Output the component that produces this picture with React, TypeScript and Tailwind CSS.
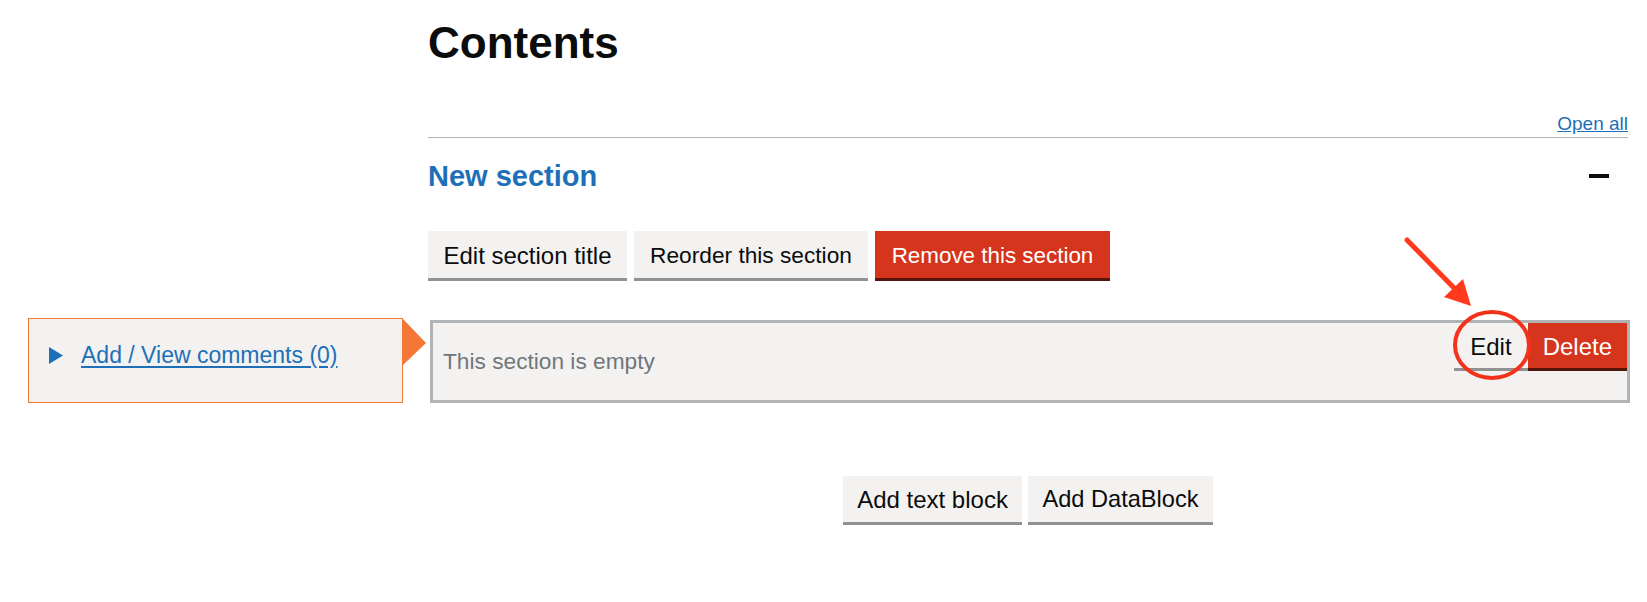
import React from 'react';

interface ButtonProps {
  label: string;
  variant?: 'secondary' | 'warning';
  className?: string;
}

const Button: React.FC<ButtonProps> = ({ label, variant = 'secondary', className = '' }) => {
  const colours =
    variant === 'warning'
      ? 'bg-[#d4351c] text-white shadow-[0_3px_0_#55150b]'
      : 'bg-[#f3f2f1] text-[#0b0c0c] shadow-[0_3px_0_#929191]';
  return (
    <button type="button" className={`leading-[29px] whitespace-nowrap text-center ${colours} ${className}`}>
      {label}
    </button>
  );
};

// red call-out drawn over the Edit button
const Annotation: React.FC = () => (
  <svg
    className="pointer-events-none absolute left-0 top-0"
    width="1647"
    height="602"
    viewBox="0 0 1647 602"
  >
    <ellipse cx="1492" cy="345" rx="37" ry="33" fill="none" stroke="#f2321a" strokeWidth="4" />
    <line x1="1407" y1="240" x2="1460" y2="294" stroke="#ff3a1d" strokeWidth="5" strokeLinecap="round" />
    <polygon points="1471,306 1444,297 1463,279" fill="#ff3a1d" />
  </svg>
);

export default function App() {
  return (
    <div className="relative min-h-[602px] w-full bg-white font-['Liberation_Sans',Arial,sans-serif] text-[#0b0c0c]">
      <div className="ml-[428px] w-[1200px]">
        <h1 className="pt-[19px] text-[44px] font-bold leading-[48px]">Contents</h1>

        <div className="mt-[45px] flex justify-end">
          <a href="#" className="text-[19px] leading-[24px] text-[#1d70b8] underline">
            Open all
          </a>
        </div>

        {/* Section header */}
        <div className="mt-[1px] flex items-center justify-between border-t border-[#b1b4b6] pt-[22px]">
          <h2 className="text-[29px] font-bold leading-[32px] text-[#1d70b8]">New section</h2>
          <span className="mr-[19px] block h-[4px] w-[20px] bg-[#0b0c0c]" />
        </div>

        <div className="mt-[39px] flex gap-[7px]">
          <Button label="Edit section title" className="w-[199px] pt-[10px] pb-[8px] text-[24px]" />
          <Button label="Reorder this section" className="w-[234px] pt-[10px] pb-[8px] text-[22.7px]" />
          <Button
            label="Remove this section"
            variant="warning"
            className="w-[235px] pt-[10px] pb-[8px] text-[22.4px]"
          />
        </div>
      </div>

      {/* Comments + section block */}
      <div className="mt-[40px] flex items-start">
        <div className="ml-[28px] flex h-[85px] w-[375px] items-center border border-[#f47738] bg-[#f3f2f1] pl-[20px] pb-[11px]">
          <svg width="14" height="17" viewBox="0 0 14 17" className="shrink-0">
            <polygon points="0,0 14,8.5 0,17" fill="#1d70b8" />
          </svg>
          <a href="#" className="ml-[18px] text-[23px] leading-[29px] text-[#1d70b8] underline underline-offset-[3px]">
            Add / View comments (0)
          </a>
        </div>
        <svg width="23" height="46" viewBox="0 0 23 46" className="mt-[1px] shrink-0">
          <polygon points="0,0 23,24 0,46" fill="#f47738" />
        </svg>
        <div className="ml-[4px] mt-[2px] flex h-[83px] w-[1200px] border-[3px] border-[#b1b4b6] bg-[#f3f2f1]">
          <p className="flex-1 self-center pl-[10px] text-[22.7px] leading-[29px] text-[#6f777b]">
            This section is empty
          </p>
          <div className="flex self-start">
            <Button label="Edit" className="px-[16px] pt-[9px] pb-[7px] text-[24px]" />
            <Button label="Delete" variant="warning" className="px-[15px] pt-[9px] pb-[7px] text-[24px]" />
          </div>
        </div>
      </div>

      <div className="ml-[428px] mt-[73px] flex w-[1200px] justify-center gap-[6px]">
        <Button label="Add text block" className="w-[179px] pt-[9px] pb-[8px] text-[24px]" />
        <Button label="Add DataBlock" className="w-[185px] pt-[9px] pb-[8px] text-[23.6px]" />
      </div>

      <Annotation />
    </div>
  );
}
